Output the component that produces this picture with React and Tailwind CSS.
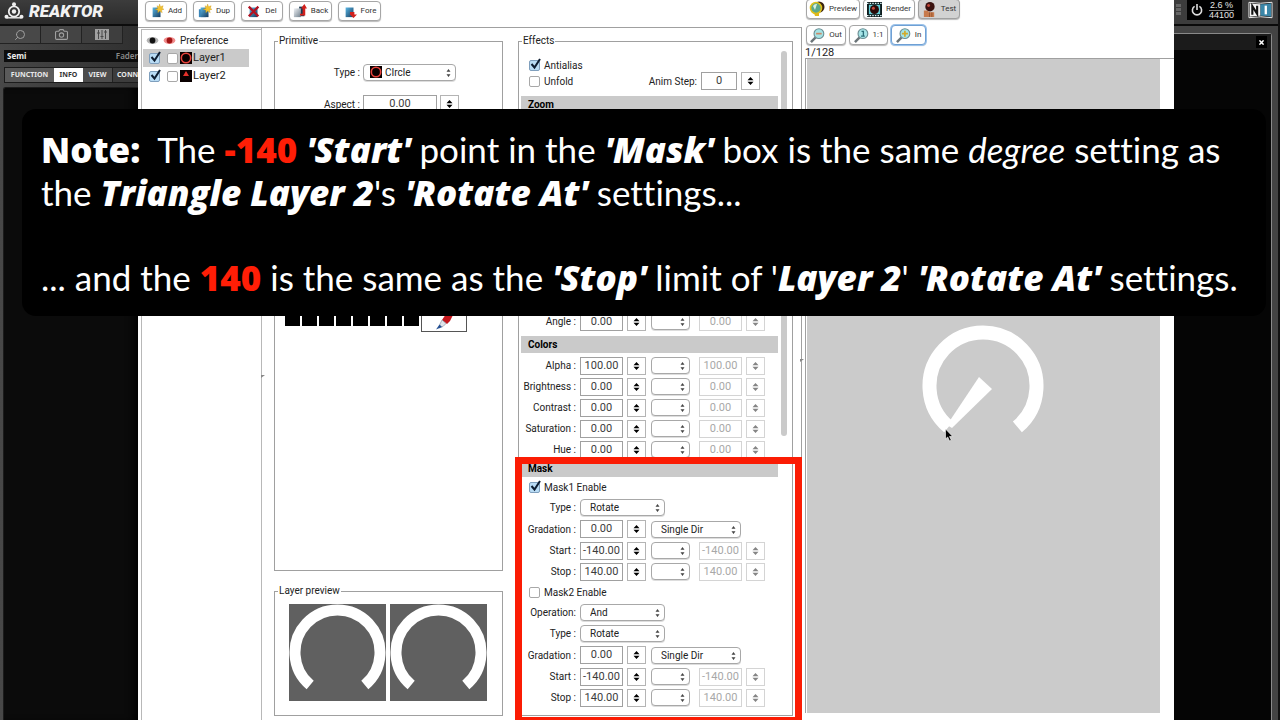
import { FiSearch, FiCamera } from "react-icons/fi";

const arcPath = (cx, cy, r) => {
  const a = (140 * Math.PI) / 180;
  const dx = r * Math.sin(a);
  const dy = -r * Math.cos(a);
  return `M${cx - dx} ${cy + dy} A${r} ${r} 0 1 1 ${cx + dx} ${cy + dy}`;
};

/* ---------- small controls ---------- */

function Check({ label, checked, hideLabel }) {
  return (
    <label className="flex items-center gap-1">
      <span className="relative block w-[11px] h-[11px]">
        <input
          type="checkbox"
          defaultChecked={checked}
          aria-label={label}
          className="peer block appearance-none w-[11px] h-[11px] rounded-[2px] border border-[#a8a8a8] bg-white checked:bg-[#b9dcf5] checked:border-[#7f9fbd]"
        />
        <svg
          viewBox="0 0 14 14"
          className="hidden peer-checked:block absolute -top-[3px] left-0 w-[14px] h-[14px] pointer-events-none"
        >
          <path d="M2.5 7 L5.5 10.5 L11 2" fill="none" stroke="#0c1c30" strokeWidth="2" />
        </svg>
      </span>
      {!hideLabel && <span>{label}</span>}
    </label>
  );
}

function Num({ label, value, off, wide }) {
  return (
    <input
      type="text"
      aria-label={label}
      defaultValue={value}
      disabled={off}
      className={`${wide || "w-[43px]"} h-[18px] px-0 pb-px text-center text-[11px] border ${
        off ? "border-[#d4d4d4] text-[#a8a8a8]" : "border-[#a0a0a0] text-[#3c3c3c]"
      } bg-white`}
    />
  );
}

function Spin({ label, off }) {
  return (
    <button
      aria-label={label}
      disabled={off}
      className={`w-[19px] h-[18px] flex items-center justify-center border bg-white ${
        off ? "border-[#d4d4d4] text-[#858585]" : "border-[#b4b4b4] text-black"
      }`}
    >
      <svg viewBox="0 0 7 8" className="w-[7px] h-[8px]" fill="currentColor">
        <path d="M3.5 0 L6.5 3.2 H0.5 Z M3.5 8 L6.5 4.8 H0.5 Z" />
      </svg>
    </button>
  );
}

function Pick({ label, value, width, pad }) {
  return (
    <span className={`relative block ${width}`}>
      <select
        aria-label={label}
        className={`block appearance-none w-full h-[17px] ${pad || "pl-[9px]"} text-[10px] leading-[13px] text-[#222] border border-[#a8a8a8] rounded-[4px] bg-white shadow-[0_1px_0_#ddd]`}
      >
        <option>{value}</option>
      </select>
      <svg
        viewBox="0 0 5 8"
        className="absolute right-[5px] top-[5px] w-[5px] h-[8px] pointer-events-none"
        fill="#444"
      >
        <path d="M2.5 0 L4.5 2.8 H0.5 Z M2.5 8 L4.5 5.2 H0.5 Z" />
      </svg>
    </span>
  );
}

function Heading({ children }) {
  return (
    <h3 className="h-[17px] pl-[7px] bg-[#cacaca] font-bold leading-[18px] text-black">{children}</h3>
  );
}

function ParamRow({ label, value }) {
  return (
    <div className="flex items-center h-[21px]">
      <span className="w-[55px] mr-1 text-right whitespace-nowrap">{label}</span>
      <Num label={label} value={value} />
      <span className="ml-1 mr-[5px]">
        <Spin label={`${label} step`} />
      </span>
      <Pick label={`${label} mode`} value="" width="w-[39px]" />
      <span className="ml-[9px] mr-1">
        <Num label={`${label} end`} value={value} off />
      </span>
      <Spin label={`${label} end step`} off />
    </div>
  );
}

function PickRow({ label, value }) {
  return (
    <div className="flex items-center h-[21px]">
      <span className="w-[55px] mr-1 text-right whitespace-nowrap">{label}</span>
      <Pick label={label} value={value} width="w-[85px]" />
    </div>
  );
}

function GradationRow() {
  return (
    <div className="flex items-center h-[22px]">
      <span className="w-[55px] mr-1 text-right whitespace-nowrap">Gradation :</span>
      <Num label="Gradation" value="0.00" />
      <span className="ml-1 mr-[5px]">
        <Spin label="Gradation step" />
      </span>
      <Pick label="Gradation direction" value="Single Dir" width="w-[90px]" />
    </div>
  );
}

function ToolButton({ icon, children, width, tone }) {
  return (
    <button
      className={`${width} h-[20px] flex items-center justify-center gap-1 rounded-[4px] border text-[8px] text-[#333] ${
        tone || "border-[#a6a6a6] bg-white"
      } shadow-[0_1px_1px_#bbb]`}
    >
      {icon}
      {children}
    </button>
  );
}

/* ---------- icons ---------- */

function PageIcon({ kind }) {
  return (
    <svg viewBox="0 0 16 16" className="w-[14px] h-[14px] shrink-0">
      <defs>
        <linearGradient id={`pg-${kind}`} x1="0" y1="0" x2="1" y2="1">
          <stop offset="0" stopColor={kind === "back" ? "#f0f2f5" : "#58b7e6"} />
          <stop offset="1" stopColor={kind === "back" ? "#6f7f8c" : "#173a5c"} />
        </linearGradient>
      </defs>
      {kind === "dup" && <path d="M1 6h8v9H1z" fill="#3c86b8" />}
      {kind === "back" && <path d="M7 3h6v11H7z" fill="#1c3a52" />}
      <path d={kind === "back" ? "M1 5h8v10H1z" : "M3 4h9v11H3z"} fill={`url(#pg-${kind})`} />
      {(kind === "add" || kind === "dup") && (
        <path
          d="M11 0l1 3 3-1-1 3 2 1-3 1 1 3-3-2-2 2 0-3-3-1 3-1-1-3 2 1z"
          fill="#f1c232"
          stroke="#c79312"
          strokeWidth="0.4"
        />
      )}
      {kind === "del" && <path d="M2 3l11 11M13 3L2 14" stroke="#b31322" strokeWidth="2.6" />}
      {kind === "back" && <path d="M8 11h3V5H9l4-5 3 5h-2v8H8z" fill="#d2201c" />}
      {kind === "fore" && <path d="M8 9h5v3h3l-4 4-4-4z" fill="#d2201c" />}
    </svg>
  );
}

function PreviewIcon() {
  return (
    <svg viewBox="0 0 16 16" className="w-[16px] h-[16px] shrink-0">
      <circle cx="10" cy="6" r="5.5" fill="#3a2412" />
      <circle cx="7" cy="7" r="5.5" fill="#5aa88c" stroke="#e0c21a" strokeWidth="1.6" />
      <path d="M4 5a4 4 0 0 1 4-2l-2 6z" fill="#d8f0e4" />
      <path d="M5 12h5v3H6z" fill="#e0b818" />
    </svg>
  );
}

function RenderIcon() {
  return (
    <svg viewBox="0 0 16 16" className="w-[15px] h-[15px] shrink-0">
      <path d="M0 0h16v16H0z" fill="#0d1a1c" />
      <path d="M0 1.5h16M0 14.5h16" stroke="#d8f2f4" strokeWidth="1.4" strokeDasharray="1.6 1.2" />
      <path d="M2 3h12v10H2z" fill="#64cdd6" />
      <circle cx="8" cy="8" r="4.8" fill="#2a0a08" />
      <circle cx="6.8" cy="6.6" r="1.6" fill="#c94a3c" />
    </svg>
  );
}

function TestIcon() {
  return (
    <svg viewBox="0 0 16 16" className="w-[15px] h-[15px] shrink-0">
      <path d="M2 9h5v2h6v5H2z" fill="#c77a4c" />
      <path d="M8 11v5M10.5 11v5" stroke="#8a4c28" strokeWidth="0.8" />
      <circle cx="8.5" cy="5" r="5" fill="#3a1210" />
      <circle cx="7" cy="3.8" r="1.6" fill="#c2473a" />
    </svg>
  );
}

function LensIcon({ mark }) {
  return (
    <svg viewBox="0 0 16 16" className="w-[15px] h-[15px] shrink-0">
      <path d="M6 10L1 15" stroke="#6b7478" strokeWidth="2.6" />
      <circle cx="9.5" cy="6" r="5.2" fill="#a5e4e6" stroke="#6c8e94" strokeWidth="1.2" />
      {mark === "out" && <path d="M6.5 6h6" stroke="#c98a6a" strokeWidth="1.8" />}
      {mark === "one" && <path d="M8 3.6h2v5M7.5 8.6h4" stroke="#2c6f7a" strokeWidth="1.4" fill="none" />}
      {mark === "in" && <path d="M6.3 6h6.4M9.5 2.8v6.4" stroke="#d3aa2a" strokeWidth="1.8" />}
    </svg>
  );
}

function EyeIcon({ color, halo }) {
  return (
    <svg viewBox="0 0 14 10" className="w-[13px] h-[9px]">
      <ellipse cx="7" cy="5" rx="6.5" ry="3.8" fill={halo} />
      <circle cx="7" cy="5" r="3.2" fill={color} />
    </svg>
  );
}

function CircleThumb() {
  return (
    <svg viewBox="0 0 12 12" className="w-[12px] h-[12px] shrink-0">
      <path d="M0 0h12v12H0z" fill="#0a0000" />
      <circle cx="6" cy="6" r="4.7" fill="none" stroke="#e8433c" strokeWidth="1.6" />
    </svg>
  );
}

function TriangleThumb() {
  return (
    <svg viewBox="0 0 12 12" className="w-[12px] h-[12px] shrink-0">
      <path d="M0 0h12v12H0z" fill="#0a0000" />
      <path d="M6 1L9 6H3z" fill="#e8302a" />
    </svg>
  );
}

function ArcTile() {
  return (
    <svg viewBox="0 0 97 97" className="w-[97px] h-[97px] bg-[#606060]">
      <path d={arcPath(48.5, 48.5, 42.5)} fill="none" stroke="#fff" strokeWidth="11" />
    </svg>
  );
}

/* ---------- host application ---------- */

function HostLeft() {
  return (
    <aside className="w-[138px] shrink-0 overflow-hidden flex flex-col bg-linear-to-r from-[#484848] to-[#303030] font-['Noto_Sans',sans-serif]">
      <header className="h-[26px] shrink-0 flex items-center gap-[5px] pl-1 pb-[3px] bg-linear-to-b from-[#3c3c3c] to-[#2a2a2a] border-b-2 border-[#0c0c0c]">
        <svg viewBox="0 0 20 18" className="w-[20px] h-[18px] shrink-0">
          <circle cx="10" cy="9.5" r="5.2" fill="none" stroke="#eee" strokeWidth="1.8" />
          <circle cx="10" cy="9.5" r="2.2" fill="#eee" />
          <circle cx="10" cy="2.2" r="2" fill="#eee" />
          <circle cx="2.5" cy="14.8" r="2" fill="#eee" />
          <circle cx="17.5" cy="14.8" r="2" fill="#eee" />
          <path d="M3 15.8h14" stroke="#eee" strokeWidth="1.4" />
        </svg>
        <span className="font-['Roboto',sans-serif] text-[17px] leading-5 font-black italic text-[#f2f2f2]">
          REAKTOR
        </span>
      </header>

      <div className="h-[18px] shrink-0 flex text-[#a0a0a0]">
        <button aria-label="Search" className="w-[41px] flex items-center justify-center bg-[#484848] border-r border-b border-[#222]">
          <FiSearch size={12} className="-scale-x-100" />
        </button>
        <button aria-label="Snapshots" className="w-[41px] flex items-center justify-center bg-[#444] border-r border-b border-[#222]">
          <FiCamera size={13} />
        </button>
        <button aria-label="Panels" className="w-[41px] flex items-center justify-center bg-[#3e3e3e] border-r border-b border-[#222]">
          <svg viewBox="0 0 14 11" className="w-[14px] h-[11px]">
            <path d="M0 0h14v11H0z" fill="#a0a0a0" />
            <path d="M3.5 1v9M7 1v9M10.5 1v9M2 4h3M5.5 7.5h3M9 3h3" stroke="#484848" />
          </svg>
        </button>
      </div>

      <div className="h-[12px] mt-[6px] ml-1 pl-[3px] shrink-0 flex items-center justify-between bg-[#0d0d0d] text-[8px] font-bold text-[#eee]">
        Semi
        <span className="text-[#8a8a8a] font-semibold">Fader</span>
      </div>

      <nav className="h-[16px] mt-[5px] ml-1 shrink-0 flex text-[7px] font-bold text-[#e8e8e8] border border-[#1c1c1c]">
        <button className="w-[49px] shrink-0 bg-[#5a5a5a]">FUNCTION</button>
        <button className="w-[29px] shrink-0 bg-white text-[#333]">INFO</button>
        <button className="w-[30px] shrink-0 bg-[#4c4c4c] border-r border-[#222]">VIEW</button>
        <button className="flex-1 pl-[4px] text-left bg-[#3c3c3c]">CONN</button>
      </nav>

      <div className="flex-1 mt-[4px] ml-[3px] rounded-tl-[3px] bg-[#0b0b0b] border-l border-t border-[#1c1c1c] shadow-[inset_-8px_0_8px_-4px_#000]" />
    </aside>
  );
}

function HostRight() {
  return (
    <aside className="w-[106px] shrink-0 flex flex-col bg-[#434343] border-r-2 border-[#111] font-['Liberation_Sans',sans-serif]">
      <header className="h-[26px] shrink-0 flex items-start justify-end gap-[6px] pr-[5px] bg-[#3c3c3c] border-b-2 border-[#0a0a0a]">
        <span className="w-[5px] pt-[4px] flex flex-col gap-px" aria-hidden="true">
          <i className="h-[3px] bg-[#666]" />
          <i className="h-[3px] bg-[#666]" />
          <i className="h-[3px] bg-[#666]" />
        </span>
        <div className="w-[55px] h-[20px] flex items-center gap-[6px] pl-1 bg-black text-[#e4e4e4]">
          <svg viewBox="0 0 12 12" className="w-[12px] h-[12px] shrink-0">
            <path d="M3.6 2.4a4.6 4.6 0 1 0 4.8 0M6 0v6" fill="none" stroke="#ddd" strokeWidth="1.6" />
          </svg>
          <div className="text-[9px] leading-[9px] text-center">
            <div className="border-b border-[#888]">2.6 %</div>
            <div>44100</div>
          </div>
        </div>
        <svg viewBox="0 0 26 18" className="w-[25px] h-[18px] mt-px shrink-0">
          <path d="M1 1q12 2 24 0v16q-12-2-24 0z" fill="#111" stroke="#eee" strokeWidth="1" />
          <path d="M2 2q6 1 11 1v12q-5 0-11 1z" fill="#f4f4f4" />
          <path d="M13 3q6 0 11-1v14q-5-1-11-1z" fill="#3a86a8" />
          <path d="M4.5 14V5l5 8V4.5" fill="none" stroke="#111" strokeWidth="2.2" />
          <path d="M18.5 4.5v9" stroke="#fff" strokeWidth="2.4" />
        </svg>
      </header>
      <div className="flex-1 flex flex-col mt-[7px] mr-[6px] rounded-tr-[3px] bg-[#050505] border-t border-r border-[#8a8a8a]">
        <div className="h-[16px] flex items-center justify-end pr-1 bg-[#1b1b1b]">
          <button aria-label="Close" className="w-[11px] h-[12px] flex items-center justify-center bg-black">
            <svg viewBox="0 0 6 6" className="w-[5px] h-[5px]">
              <path d="M0.5 0.5l5 5M5.5 0.5l-5 5" stroke="#fff" strokeWidth="1.8" />
            </svg>
          </button>
        </div>
      </div>
    </aside>
  );
}

/* ---------- editor window ---------- */

function SplitMark({ place }) {
  return (
    <svg viewBox="0 0 4 4" className={`absolute w-[4px] h-[4px] ${place}`}>
      <path d="M0 4V1h4z" fill="#888" />
    </svg>
  );
}

function LayerList() {
  return (
    <div className="relative w-[124px] shrink-0 pt-[1px] pl-[3px] border-r border-[#b8b8b8]">
      <div className="h-full pl-px pt-px pr-3 border-l border-t border-[#b8b8b8] text-[11px]">
        <div className="h-[18px] flex items-center gap-1 pl-[3px]">
          <EyeIcon color="#111" halo="#b4b4b4" />
          <EyeIcon color="#a01414" halo="#f08c8c" />
          <span className="text-[10px]">Preference</span>
        </div>
        <div className="h-[18px] flex items-center pl-[6px] bg-[#cacaca]">
          <Check label="Layer1 visible" checked hideLabel />
          <span className="ml-[7px] mr-[2px]">
            <Check label="Layer1 solo" hideLabel />
          </span>
          <CircleThumb />
          <span className="ml-px">Layer1</span>
        </div>
        <div className="h-[18px] flex items-center pl-[6px]">
          <Check label="Layer2 visible" checked hideLabel />
          <span className="ml-[7px] mr-[2px]">
            <Check label="Layer2 solo" hideLabel />
          </span>
          <TriangleThumb />
          <span className="ml-px">Layer2</span>
        </div>
      </div>
      <SplitMark place="-right-[4px] top-[346px]" />
    </div>
  );
}

function PrimitiveColumn() {
  return (
    <div className="flex-1 min-w-0 flex flex-col gap-3 pt-[5px] pb-1 pl-3">
      <fieldset className="flex-1 min-w-0 border border-[#a0a0a0]">
        <legend className="ml-[3px] px-px leading-4">Primitive</legend>
        <div className="flex items-center h-[22px] mt-[12px]">
          <span className="w-[85px] mr-[3px] text-right">Type :</span>
          <span className="relative">
            <Pick label="Type" value="CIrcle" width="w-[93px]" pad="pl-[21px]" />
            <span className="absolute left-[7px] top-[2px] pointer-events-none">
              <CircleThumb />
            </span>
          </span>
        </div>
        <div className="flex items-center h-[22px] mt-[10px] gap-[3px]">
          <span className="w-[85px] text-right">Aspect :</span>
          <Num label="Aspect" value="0.00" wide="w-[74px]" />
          <Spin label="Aspect step" />
        </div>
        <div className="flex items-start mt-[193px] pl-[10px] gap-[2px]">
          {[0, 1, 2, 3, 4, 5, 6, 7].map((i) => (
            <button key={i} aria-label={`Color ${i + 1}`} className="w-[15px] h-[18px] bg-black" />
          ))}
          <button
            aria-label="Pick color"
            className="w-[46px] h-[24px] flex items-center justify-center border border-[#555] bg-white"
          >
            <svg viewBox="0 0 18 20" className="w-[18px] h-[20px]">
              <path d="M11 4l4-3 3 4-3 6-3 3-5-4z" fill="#c4161c" />
              <path d="M7 10l4 3.5-3 3-4 1.5 1-4z" fill="#dfe4ea" stroke="#7c8796" strokeWidth="0.6" />
              <path d="M1 19.5l3.5-5 2.5 2.5z" fill="#234f92" />
            </svg>
          </button>
        </div>
      </fieldset>

      <fieldset className="h-[133px] min-w-0 border border-[#a0a0a0]">
        <legend className="ml-[3px] px-px leading-4">Layer preview</legend>
        <div className="flex justify-center gap-1 pt-[5px] pr-[2px]">
          <ArcTile />
          <ArcTile />
        </div>
      </fieldset>
    </div>
  );
}

function EffectsColumn() {
  return (
    <div className="relative w-[275px] shrink-0 flex flex-col ml-[15px] mr-2 pt-[5px] pb-1">
      <fieldset className="flex-1 min-w-0 border border-[#a0a0a0]">
        <legend className="ml-[3px] px-px leading-4">Effects</legend>
        <div className="flex gap-[3px] px-[2px] h-full">
          <div className="w-[257px]">
            <div className="h-[16px] mt-[8px] pl-2 flex items-center">
              <Check label="Antialias" checked />
            </div>
            <div className="h-[16px] pl-2 pr-[18px] flex items-center">
              <Check label="Unfold" />
              <span className="ml-auto mr-1">Anim Step:</span>
              <Num label="Anim Step" value="0" wide="w-[36px]" />
              <span className="ml-1">
                <Spin label="Anim Step step" />
              </span>
            </div>

            <div className="h-[215px] mt-[7px]">
              <Heading>Zoom</Heading>
            </div>
            <ParamRow label="Angle :" value="0.00" />

            <div className="mt-1 mb-[2px]">
              <Heading>Colors</Heading>
            </div>
            <ParamRow label="Alpha :" value="100.00" />
            <ParamRow label="Brightness :" value="0.00" />
            <ParamRow label="Contrast :" value="0.00" />
            <ParamRow label="Saturation :" value="0.00" />
            <ParamRow label="Hue :" value="0.00" />

            <Heading>Mask</Heading>
            <div className="h-[20px] pl-2 flex items-center">
              <Check label="Mask1 Enable" checked />
            </div>
            <PickRow label="Type :" value="Rotate" />
            <GradationRow />
            <ParamRow label="Start :" value="-140.00" />
            <ParamRow label="Stop :" value="140.00" />
            <div className="h-[20px] pl-2 flex items-center">
              <Check label="Mask2 Enable" />
            </div>
            <PickRow label="Operation:" value="And" />
            <PickRow label="Type :" value="Rotate" />
            <GradationRow />
            <ParamRow label="Start :" value="-140.00" />
            <ParamRow label="Stop :" value="140.00" />
          </div>
          {/* scroll thumb */}
          <div className="w-[6px] h-[385px] mt-[2px] rounded-full bg-[#cacaca]" />
        </div>
      </fieldset>

      {/* red highlight around the mask settings */}
      <div className="absolute -left-[3px] -right-[9px] top-[429px] bottom-0 border-7 border-b-3 border-[#fb1c04] pointer-events-none" />
      <SplitMark place="-right-[11px] top-[330px]" />
    </div>
  );
}

function PreviewPane() {
  return (
    <section className="flex-1 min-w-0 flex flex-col pl-[3px] pb-[7px] bg-white">
      <div className="flex gap-[3px] pl-px -mt-px">
        <ToolButton icon={<PreviewIcon />} width="w-[54px]">Preview</ToolButton>
        <ToolButton icon={<RenderIcon />} width="w-[52px]">Render</ToolButton>
        <ToolButton icon={<TestIcon />} width="w-[42px]" tone="border-[#a0a0a0] bg-[#d2d2d2]">
          Test
        </ToolButton>
      </div>
      <div className="flex gap-[3px] pl-px mt-[6px]">
        <ToolButton icon={<LensIcon mark="out" />} width="w-[40px]">Out</ToolButton>
        <ToolButton icon={<LensIcon mark="one" />} width="w-[39px]">1:1</ToolButton>
        <ToolButton
          icon={<LensIcon mark="in" />}
          width="w-[35px]"
          tone="border-[#6fa0d4] bg-white ring-1 ring-[#9cc3ea]"
        >
          In
        </ToolButton>
      </div>
      <div className="h-[13px] text-[11px] leading-[15px]">1/128</div>
      <div className="flex-1 pr-[14px] pl-px border-t border-l border-[#a0a0a0]">
        <div className="h-full bg-[#cbcbcb] overflow-hidden">
          <svg viewBox="0 0 124 124" className="w-[124px] h-[124px] ml-[114px] mt-[265px]" aria-label="Knob">
            <path d={arcPath(62, 62, 53.5)} fill="none" stroke="#fff" strokeWidth="14" />
            <path d="M58 53L71 65L31 104L26 101Z" fill="#fff" />
            <path
              d="M24.5 105v10l2.2-2 1.800 4 1.8-.8-1.8-3.7h3.2z"
              fill="#000"
              stroke="#fff"
              strokeWidth="0.6"
            />
          </svg>
        </div>
      </div>
    </section>
  );
}

/* ---------- caption over the window ---------- */

function Strong({ children, tone = "italic" }) {
  return <b className={`font-['Open_Sans',sans-serif] font-extrabold ${tone}`}>{children}</b>;
}

function Note() {
  return (
    <div className="absolute left-[22px] right-[14px] top-[109px] h-[207px] pl-[19px] pt-[19px] rounded-[14px] bg-black text-white font-['Lato',sans-serif] text-[35px] leading-[42px] whitespace-nowrap [font-variant-ligatures:none]">
      <p>
        <Strong tone="not-italic">Note:</Strong>&nbsp; The <Strong tone="text-[#ff1e06]">-140</Strong>{" "}
        <Strong>'Start'</Strong> point in the <Strong>'Mask'</Strong> box is the same <i>degree</i> setting as
      </p>
      <p>
        the <Strong>Triangle Layer 2</Strong>'s <Strong>'Rotate At'</Strong> settings...
      </p>
      <p className="mt-[42px]">
        ... and the <Strong tone="text-[#ff1e06]">140</Strong> is the same as the <Strong>'Stop'</Strong> limit of '
        <Strong>Layer 2</Strong>' <Strong>'Rotate At'</Strong> settings.
      </p>
    </div>
  );
}

export default function App() {
  return (
    <div className="relative h-screen overflow-hidden flex bg-black">
      <HostLeft />

      <main className="flex-1 min-w-0 flex bg-white text-[#222] font-['Roboto',sans-serif] text-[10px]">
        <div className="w-[664px] shrink-0 flex flex-col">
          <div className="h-[27px] shrink-0 flex gap-[6px] pl-[7px] pt-px">
            <ToolButton icon={<PageIcon kind="add" />} width="w-[42px]">Add</ToolButton>
            <ToolButton icon={<PageIcon kind="dup" />} width="w-[42px]">Dup</ToolButton>
            <ToolButton icon={<PageIcon kind="del" />} width="w-[42px]">Del</ToolButton>
            <ToolButton icon={<PageIcon kind="back" />} width="w-[43px]">Back</ToolButton>
            <ToolButton icon={<PageIcon kind="fore" />} width="w-[43px]">Fore</ToolButton>
          </div>
          <div className="flex-1 min-h-0 flex border-t border-r border-[#a0a0a0]">
            <LayerList />
            <PrimitiveColumn />
            <EffectsColumn />
          </div>
        </div>
        <PreviewPane />
      </main>

      <HostRight />
      <Note />
    </div>
  );
}
